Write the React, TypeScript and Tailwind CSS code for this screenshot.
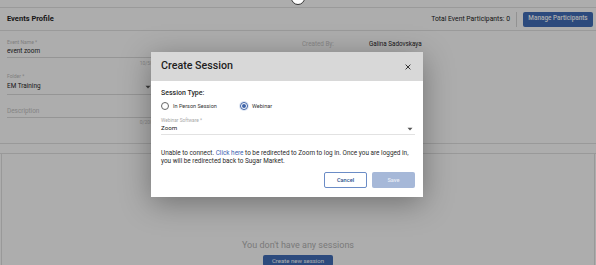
export default function App() {
  return (
    <div className="relative w-[596px] h-[265px] overflow-hidden bg-white font-['Roboto','Liberation_Sans',sans-serif]">
      {/* page under the dialog */}
      <div className="h-[7px]" />
      <div className="border-t border-[#e4e4e4]">
        <div className="flex h-[23px] items-center justify-between border-b border-[#e4e4e4] pl-[7px] pr-[3px]">
          <div className="text-[7.5px] font-bold text-[#1f1f1f]">Events Profile</div>
          <div className="flex items-center">
            <span className="text-[6.8px] text-[#222]">Total Event Participants: 0</span>
            <span className="mx-[6px] h-[15px] w-px bg-[#d8d8d8]" />
            <button className="h-[15px] w-[70px] rounded-[2px] bg-[#416db9] text-[6.4px] font-medium text-white">
              Manage Participants
            </button>
          </div>
        </div>

        <div className="flex pl-[7px] pt-[7px]">
          <div className="w-[146px]">
            <div className="h-[8px] text-[5px] leading-[8px] text-[#bdbdbd]">Event Name *</div>
            <div className="h-[12px] border-b border-[#dcdcdc] text-[6.4px] leading-[11px] text-[#262626]">event zoom</div>
            <div className="h-[10px] text-right text-[5px] leading-[10px] text-[#c4c4c4]">10/50</div>

            <div className="mt-[4px] h-[8px] text-[5px] leading-[8px] text-[#bdbdbd]">Folder *</div>
            <div className="flex h-[15px] items-center justify-between border-b border-[#dcdcdc] text-[6.4px] text-[#262626]">
              <span>EM Training</span>
              <svg width="6" height="4" viewBox="0 0 6 4" className="mr-[2px]"><path d="M0.5 0.8 L3 3.4 L5.5 0.8Z" fill="#555" /></svg>
            </div>

            <div className="mt-[12px] flex h-[11px] items-center justify-between border-b border-[#dcdcdc] text-[6.4px] text-[#c4c4c4]">
              <span>Description</span>
            </div>
            <div className="h-[9px] text-right text-[5px] leading-[9px] text-[#c4c4c4]">0/200</div>
          </div>
          <div className="ml-[149px] flex h-[14px] items-center text-[6.3px]">
            <span className="w-[67px] text-[#c8c8c8]">Created By:</span>
            <span className="text-[#262626]">Galina Sadovskaya</span>
          </div>
        </div>

        <div className="mt-[16px] h-[11px] border-y border-[#e2e2e2]" />
        <div className="mx-px flex h-[112px] flex-col items-center border-x border-[#e2e2e2] pt-[85px]">
          <div className="h-[12px] text-[9px] leading-[12px] text-[#b4b4b4]">You don't have any sessions</div>
          <button className="mt-[4px] h-[16px] w-[70px] rounded-[2px] bg-[#416db9] text-[6px] text-white">
            Create new session
          </button>
        </div>
      </div>

      {/* dialog overlay */}
      <div className="absolute inset-0 bg-black/[0.32] pl-[151px] pt-[52px]">
        <div className="w-[272px] bg-white shadow-[0_6px_28px_rgba(0,0,0,0.35)]">
          <div className="flex h-[29px] items-center justify-between bg-[#d8d8d8] pl-[10px] pr-[12px]">
            <span className="text-[10.7px] font-medium text-[#1e1e1e]">Create Session</span>
            <svg width="6" height="6" viewBox="0 0 6 6">
              <path d="M0.6 0.6 L5.4 5.4 M5.4 0.6 L0.6 5.4" stroke="#333" strokeWidth="1" />
            </svg>
          </div>
          <div className="pl-[10px] pr-[8px] pt-[8px] pb-[9px]">
            <div className="h-[9px] text-[7px] font-medium leading-[9px] text-[#2a2a2a]">Session Type:</div>
            <div className="mt-[3px] flex h-[10px] items-center text-[5.5px] text-[#333]">
              <span className="h-[8px] w-[8px] rounded-full border border-[#666]" />
              <span className="ml-[4px] w-[66px]">In Person Session</span>
              <span className="flex h-[10px] w-[10px] items-center justify-center rounded-full bg-[#dfe6f3]">
                <span className="flex h-[8px] w-[8px] items-center justify-center rounded-full border border-[#3e64a8] bg-white">
                  <span className="h-[4px] w-[4px] rounded-full bg-[#3e64a8]" />
                </span>
              </span>
              <span className="ml-[3px]">Webinar</span>
            </div>
            <div className="mt-[6px] h-[7px] text-[4.8px] leading-[7px] text-[#a8a8a8]">Webinar Software *</div>
            <div className="flex h-[11px] items-center justify-between border-b border-[#e2e2e2] text-[6.2px] text-[#262626]">
              <span>Zoom</span>
              <svg width="6" height="4" viewBox="0 0 6 4" className="mr-[2px]"><path d="M0.5 0.8 L3 3.4 L5.5 0.8Z" fill="#555" /></svg>
            </div>
            <p className="mt-[14px] text-[6.4px] leading-[8px] text-[#2a2a2a]">
              Unable to connect. <span className="text-[#3b64b0]">Click here</span> to be redirected to Zoom to log in. Once you are logged in,
              you will be redirected back to Sugar Market.
            </p>
            <div className="mt-[7px] flex justify-end gap-[5px]">
              <button className="h-[16px] w-[43px] rounded-[2px] border border-[#6b8cc6] bg-white text-[5.6px] font-medium text-[#2f4f8c]">
                Cancel
              </button>
              <button className="h-[16px] w-[43px] rounded-[2px] bg-[#a6b8d8] text-[5.6px] font-medium text-[#e8edf6]">
                Save
              </button>
            </div>
          </div>
        </div>
      </div>

      {/* indicator at the top edge */}
      <span className="absolute left-[291px] top-[-9px] h-[14px] w-[14px] rounded-full border-[1.5px] border-[#333] bg-white" />
    </div>
  );
}
